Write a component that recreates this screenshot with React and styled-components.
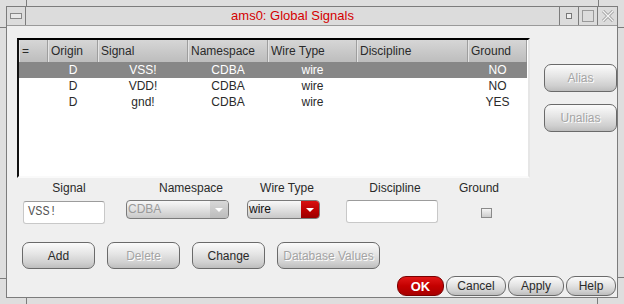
import React from "react";
import styled, { createGlobalStyle, css } from "styled-components";

const GlobalStyle = createGlobalStyle`
  body {
    margin: 0;
    background: #dedede;
    font-family: "Liberation Sans", Arial, sans-serif;
    font-size: 12px;
  }
`;

const Window = styled.div`
  position: relative;
  width: 624px;
  height: 304px;
  box-sizing: border-box;
  padding: 6px;
  background: #dedede;
`;

const Grip = styled.div`
  position: absolute;
  background: #7c7c7c;
  ${(p) =>
    p.vertical
      ? css`
          width: 1px;
          height: 6px;
        `
      : css`
          width: 6px;
          height: 1px;
        `}
`;

const Inner = styled.div`
  height: 100%;
  box-sizing: border-box;
  border: 1px solid #7c7c7c;
  display: flex;
  flex-direction: column;
`;

const TitleBar = styled.div`
  height: 18px;
  display: flex;
  background: #dcdcdc;
  border-bottom: 1px solid #9a9a9a;
`;

const TitleButton = styled.div`
  width: ${(p) => p.w || 18}px;
  display: flex;
  align-items: center;
  justify-content: center;
  border-left: ${(p) => (p.left ? "none" : "1px solid #7c7c7c")};
  border-right: ${(p) => (p.left ? "1px solid #7c7c7c" : "none")};
`;

const Title = styled.div`
  flex: 1;
  text-align: center;
  line-height: 18px;
  color: #d40000;
  font-size: 13px;
`;

const Body = styled.div`
  flex: 1;
  background: #efefef;
  padding: 12px 0 0 10px;
  display: flex;
  flex-direction: column;
`;

const TopArea = styled.div`
  display: flex;
`;

const TableBox = styled.div`
  width: 509px;
  height: 136px;
  background: #fff;
  border-top: 2px solid #000;
  border-left: 2px solid #111;
  border-right: 2px solid #e6e6e6;
  border-bottom: 2px solid #fafafa;
`;

const Grid = styled.div`
  display: grid;
  grid-template-columns: 29px 50px 90px 80px 89px 111px 59px;
`;

const HeadCell = styled.div`
  height: 22px;
  line-height: 22px;
  padding-left: 2px;
  color: #2a2a2a;
  background: linear-gradient(#d6d6d6, #bdbdbd);
  border-right: 1px solid #9e9e9e;
  border-left: 1px solid #e4e4e4;
  white-space: nowrap;
  overflow: hidden;
`;

const Cell = styled.div`
  height: 16px;
  line-height: 16px;
  text-align: center;
  color: ${(p) => (p.selected ? "#fff" : "#2a2a2a")};
  background: ${(p) => (p.selected ? "#878787" : "#fff")};
  white-space: nowrap;
`;

const SideButtons = styled.div`
  margin: 26px 0 0 14px;
  display: flex;
  flex-direction: column;
  gap: 12px;
`;

const Button = styled.button`
  box-sizing: border-box;
  width: ${(p) => p.w}px;
  height: ${(p) => p.h || 27}px;
  padding: 0;
  font-family: "Liberation Sans", Arial, sans-serif;
  font-size: 12px;
  border: 1px solid #6a6a6a;
  border-radius: ${(p) => p.r || 7}px;
  background: linear-gradient(#fbfbfb, #e4e4e4 45%, #cfcfcf 80%, #bdbdbd);
  color: ${(p) => (p.disabled ? "#a4a4a4" : "#2a2a2a")};
  text-shadow: ${(p) => (p.disabled ? "1px 1px 0 #fff" : "none")};
`;

const OkButton = styled(Button)`
  background: linear-gradient(#e01818, #c40000 50%, #a80000);
  border-color: #7a0000;
  color: #fff;
  font-weight: bold;
  font-size: 13px;
`;

const LabelRow = styled.div`
  display: flex;
  margin-top: 3px;
  height: 14px;
`;

const Label = styled.div`
  width: ${(p) => p.w}px;
  margin-left: ${(p) => p.ml}px;
  text-align: center;
  color: #2a2a2a;
  line-height: 14px;
  white-space: nowrap;
`;

const ControlRow = styled.div`
  display: flex;
  align-items: flex-start;
  margin-top: 5px;
  height: 23px;
`;

const TextInput = styled.div`
  box-sizing: border-box;
  width: ${(p) => p.w}px;
  height: 23px;
  margin-left: ${(p) => p.ml}px;
  margin-top: ${(p) => p.mt || 0}px;
  background: #fff;
  border: 1px solid #c8c8c8;
  border-top-color: #9c9c9c;
  border-radius: 3px;
  padding: 3px 0 0 4px;
  font-family: "Liberation Mono", "Courier New", monospace;
  font-size: 12px;
  color: #555;
`;

const Combo = styled.div`
  box-sizing: border-box;
  width: ${(p) => p.w}px;
  height: 19px;
  margin-left: ${(p) => p.ml}px;
  display: flex;
  border: 1px solid #7a7a7a;
  border-radius: 4px;
  overflow: hidden;
  background: linear-gradient(#f8f8f8, #dcdcdc 60%, #c8c8c8);
`;

const ComboText = styled.div`
  flex: 1;
  padding-left: 1px;
  line-height: 17px;
  color: ${(p) => (p.disabled ? "#9a9a9a" : "#111")};
`;

const ComboArrow = styled.div`
  width: 18px;
  display: flex;
  align-items: center;
  justify-content: center;
  background: ${(p) =>
    p.red
      ? "linear-gradient(#d81010, #b80000 60%, #9a0000)"
      : "linear-gradient(#d8d8d8, #bcbcbc)"};
  &::after {
    content: "";
    border-left: 4px solid transparent;
    border-right: 4px solid transparent;
    border-top: 4px solid #fff;
  }
`;

const Checkbox = styled.div`
  box-sizing: border-box;
  width: 11px;
  height: 10px;
  margin: 8px 0 0 ${(p) => p.ml}px;
  border: 1px solid #8a8a8a;
  background: linear-gradient(#f4f4f4, #cccccc);
`;

const ActionRow = styled.div`
  display: flex;
  margin-top: 19px;
  padding-left: 5px;
  gap: 12px;
`;

const BottomRow = styled.div`
  display: flex;
  justify-content: flex-end;
  gap: 2px;
  margin-top: 7px;
  padding-right: 1px;
`;

export default function App() {
  const headers = ["=", "Origin", "Signal", "Namespace", "Wire Type", "Discipline", "Ground"];
  const rows = [
    ["", "D", "VSS!", "CDBA", "wire", "", "NO"],
    ["", "D", "VDD!", "CDBA", "wire", "", "NO"],
    ["", "D", "gnd!", "CDBA", "wire", "", "YES"],
  ];

  return (
    <Window>
      <GlobalStyle />
      <Grip vertical style={{ left: 26, top: 0 }} />
      <Grip vertical style={{ left: 598, top: 0 }} />
      <Grip style={{ left: 0, top: 27 }} />
      <Grip style={{ right: 0, top: 27 }} />
      <Grip style={{ left: 0, top: 278 }} />
      <Grip style={{ right: 0, top: 277 }} />
      <Grip vertical style={{ left: 26, bottom: 0 }} />
      <Grip vertical style={{ left: 597, bottom: 0 }} />
      <Inner>
        <TitleBar>
          <TitleButton left>
            <svg width="12" height="6">
              <rect x="0.5" y="0.5" width="11" height="5" fill="#e8e8e8" stroke="#888" />
            </svg>
          </TitleButton>
          <Title>ams0: Global Signals</Title>
          <TitleButton>
            <svg width="6" height="6">
              <rect x="0.5" y="0.5" width="5" height="5" fill="#eee" stroke="#777" />
            </svg>
          </TitleButton>
          <TitleButton>
            <svg width="12" height="12">
              <rect x="0.5" y="0.5" width="11" height="11" fill="none" stroke="#999" />
            </svg>
          </TitleButton>
          <TitleButton w={19}>
            <svg width="12" height="12">
              <path d="M1 1 L11 11 M11 1 L1 11" stroke="#999" strokeWidth="3" />
              <path d="M1 1 L11 11 M11 1 L1 11" stroke="#f4f4f4" strokeWidth="1.4" />
            </svg>
          </TitleButton>
        </TitleBar>
        <Body>
          <TopArea>
            <TableBox>
              <Grid>
                {headers.map((h) => (
                  <HeadCell key={h}>{h}</HeadCell>
                ))}
                {rows.map((r, i) =>
                  r.map((c, j) => (
                    <Cell key={i + "-" + j} selected={i === 0}>
                      {c}
                    </Cell>
                  ))
                )}
              </Grid>
            </TableBox>
            <SideButtons>
              <Button w={73} h={28} disabled>
                Alias
              </Button>
              <Button w={73} h={28} disabled>
                Unalias
              </Button>
            </SideButtons>
          </TopArea>
          <LabelRow>
            <Label w={60} ml={22}>Signal</Label>
            <Label w={80} ml={52}>Namespace</Label>
            <Label w={70} ml={21}>Wire Type</Label>
            <Label w={70} ml={38}>Discipline</Label>
            <Label w={50} ml={24}>Ground</Label>
          </LabelRow>
          <ControlRow>
            <TextInput w={82} ml={6} mt={1}>VSS!</TextInput>
            <Combo w={103} ml={21}>
              <ComboText disabled>CDBA</ComboText>
              <ComboArrow />
            </Combo>
            <Combo w={73} ml={18}>
              <ComboText>wire</ComboText>
              <ComboArrow red />
            </Combo>
            <TextInput w={92} ml={26} />
            <Checkbox ml={43} />
          </ControlRow>
          <ActionRow>
            <Button w={73}>Add</Button>
            <Button w={73} disabled>Delete</Button>
            <Button w={73}>Change</Button>
            <Button w={103} disabled>Database Values</Button>
          </ActionRow>
          <BottomRow>
            <OkButton w={47} h={20} r={9}>OK</OkButton>
            <Button w={60} h={20} r={9}>Cancel</Button>
            <Button w={56} h={20} r={9}>Apply</Button>
            <Button w={50} h={20} r={9}>Help</Button>
          </BottomRow>
        </Body>
      </Inner>
    </Window>
  );
}
